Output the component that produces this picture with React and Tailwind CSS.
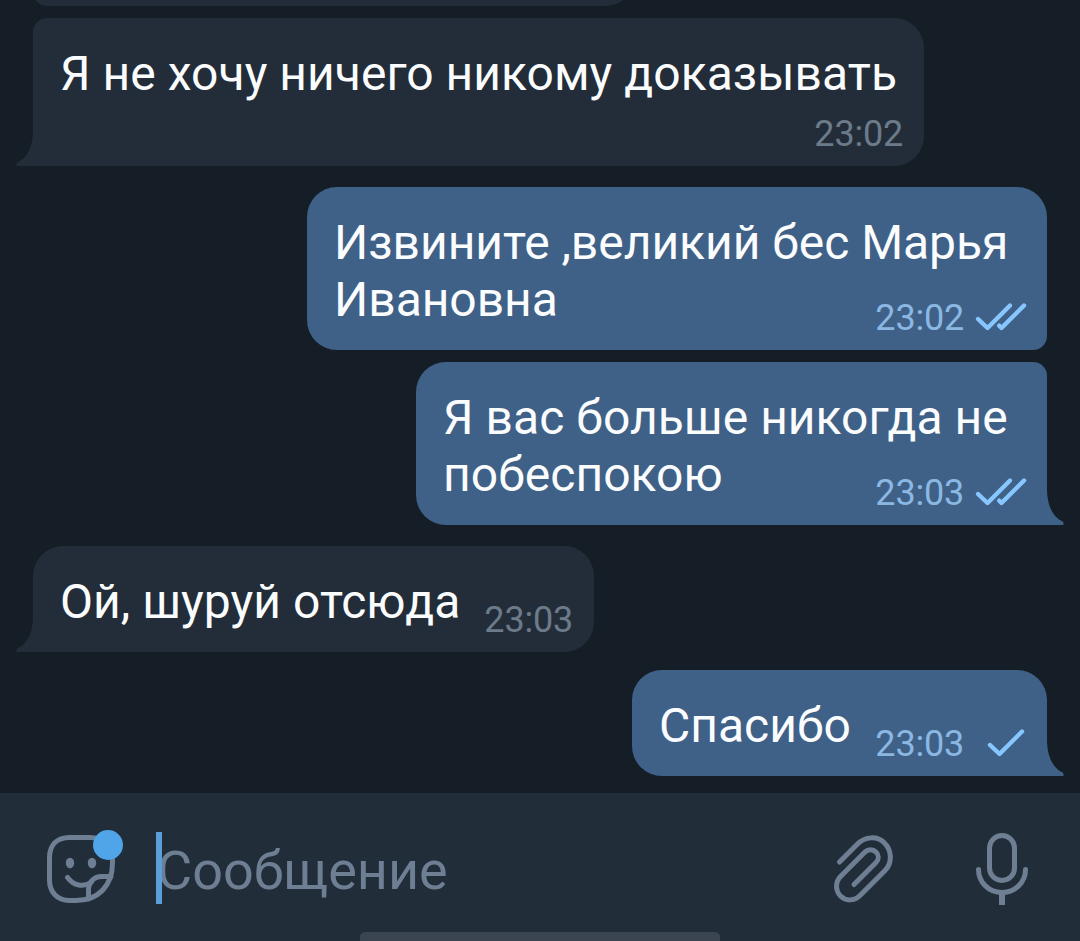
const ROUNDING = {
  inFirst: 'rounded-tl-[14px] rounded-tr-[30px] rounded-br-[30px]',
  inSingle: 'rounded-tl-[30px] rounded-tr-[30px] rounded-br-[30px]',
  outTop: 'rounded-l-[30px] rounded-tr-[30px] rounded-br-[14px]',
  outBottom: 'rounded-l-[30px] rounded-tr-[14px]',
  outSingle: 'rounded-l-[30px] rounded-tr-[30px]',
};

function Tail({ out }) {
  return (
    <svg
      className={out ? 'absolute bottom-0 left-full' : 'absolute right-full bottom-0 -scale-x-100'}
      width="17"
      height="34"
      viewBox="0 0 17 34"
      fill="currentColor"
      aria-hidden="true"
    >
      <path d="M0 0C0.500 15 6 26 15.500 30.500C17 31.500 17 34 15.500 34H0Z" />
    </svg>
  );
}

function Checks({ double }) {
  return (
    <svg
      width="56"
      height="32"
      viewBox="0 0 56 32"
      fill="none"
      stroke="#87c6fe"
      strokeWidth="4.400"
      strokeLinecap="round"
      strokeLinejoin="round"
      aria-hidden="true"
    >
      {double ? (
        <>
          <path d="M6 18L15.500 27L38 4.500" />
          <path d="M27.300 24.700L29.500 27L52 4.500" />
        </>
      ) : (
        <path d="M18 18L27.500 27L50 4.500" />
      )}
    </svg>
  );
}

function Bubble({ out, tail, shape, size, tracking = '', time, checks, children }) {
  return (
    <div
      className={`relative grid ${size} ${shape} ${
        out ? 'self-end bg-[#3f6187] text-[#3f6187]' : 'self-start bg-[#222d39] text-[#222d39]'
      }`}
    >
      <p
        className={`col-start-1 row-start-1 pt-[27px] pl-[27px] text-[48px] leading-[57px] whitespace-nowrap text-[#fbfcfd] ${tracking}`}
      >
        {children}
      </p>
      <div
        className={`col-start-1 row-start-1 flex items-end self-end justify-self-end pb-[11px] text-[36px] leading-[42px] ${
          out ? 'text-[#8bb8e2]' : 'pr-[21px] text-[#6c7b8a]'
        }`}
      >
        <span className="tracking-[-0.2px]">{time}</span>
        {checks && (
          <span className="pr-[19px] pb-[6px] pl-[8px]">
            <Checks double={checks === 2} />
          </span>
        )}
      </div>
      {tail && <Tail out={out} />}
    </div>
  );
}

function StickerIcon() {
  return (
    <svg width="84" height="84" viewBox="0 0 84 84" fill="none" aria-hidden="true">
      <g stroke="#6e7f93" strokeWidth="5" strokeLinecap="round" strokeLinejoin="round">
        <path d="M29.500 10.500H50C63 10.500 72.500 19 72.500 32V36C72.500 59 58 73.500 36 73.500H29.500C17 73.500 9.500 65 9.500 53V31C9.500 18 17 10.500 29.500 10.500Z" />
        <path d="M27.500 50.500C34 59 43 60.500 51 55.500" />
        <path d="M48.500 72V63C48.500 55 54 49.500 62 49.500H71" />
      </g>
      <ellipse cx="30" cy="36" rx="4.200" ry="5.300" fill="#6e7f93" />
      <ellipse cx="52" cy="36" rx="4.200" ry="5.300" fill="#6e7f93" />
      <circle cx="68" cy="18" r="15" fill="#4fa5e8" />
    </svg>
  );
}

function ClipIcon() {
  return (
    <svg
      width="64"
      height="72"
      viewBox="0 0 64 72"
      fill="none"
      stroke="#6e7f93"
      strokeWidth="5"
      strokeLinecap="round"
      aria-hidden="true"
    >
      <path d="M7.500 29L25.500 11C33 3.500 45 2.500 52.500 10C60 17.500 60.500 30 53 37.500L28 62.500C22.500 68 14 68.500 8.500 63C3.200 57.500 3.200 49 8.500 43.500L33 19C36 16 41 16 44 19C47 22 47 26.500 44 29.500L22 51.500" />
    </svg>
  );
}

function MicIcon() {
  return (
    <svg
      width="56"
      height="76"
      viewBox="0 0 56 76"
      fill="none"
      stroke="#6e7f93"
      strokeWidth="5"
      aria-hidden="true"
    >
      <rect x="15.500" y="4.500" width="25" height="45" rx="12.500" />
      <path d="M4.500 38.500C4.500 51.500 15 61.500 28 61.500C41 61.500 51.500 51.500 51.500 38.500" strokeLinecap="round" />
      <path d="M28 61V74" strokeWidth="6" />
    </svg>
  );
}

export default function App() {
  return (
    <div className="flex h-[941px] w-[1080px] flex-col overflow-hidden bg-[#151e27] font-['Roboto',sans-serif]">
      <main className="flex h-[793px] shrink-0 flex-col px-[33px]">
        <div className="flex h-[6px] shrink-0 items-end overflow-hidden">
          <div className="h-[60px] w-[602px] shrink-0 rounded-br-[30px] rounded-bl-[14px] bg-[#222d39]" />
        </div>
        <div className="flex flex-col pt-[12px]">
          <Bubble
            tail
            shape={ROUNDING.inFirst}
            size="w-[891px] h-[148px]"
            tracking="tracking-[0.04px]"
            time="23:02"
          >
            Я не хочу ничего никому доказывать
          </Bubble>
        </div>
        <div className="flex flex-col gap-[12px] pt-[21px]">
          <Bubble
            out
            shape={ROUNDING.outTop}
            size="w-[740px] h-[163px]"
            tracking="tracking-[-0.03px]"
            time="23:02"
            checks={2}
          >
            Извините ,великий бес Марья
            <br />
            Ивановна
          </Bubble>
          <Bubble
            out
            tail
            shape={ROUNDING.outBottom}
            size="w-[631px] h-[163px]"
            tracking="tracking-[0.04px]"
            time="23:03"
            checks={2}
          >
            Я вас больше никогда не
            <br />
            побеспокою
          </Bubble>
        </div>
        <div className="flex flex-col pt-[21px]">
          <Bubble
            tail
            shape={ROUNDING.inSingle}
            size="w-[561px] h-[106px]"
            tracking="tracking-[0.04px]"
            time="23:03"
          >
            Ой, шуруй отсюда
          </Bubble>
        </div>
        <div className="flex flex-col pt-[18px]">
          <Bubble out tail shape={ROUNDING.outSingle} size="w-[415px] h-[106px]" time="23:03" checks={1}>
            Спасибо
          </Bubble>
        </div>
      </main>
      <footer className="flex h-[148px] shrink-0 flex-col bg-[#222d3a]">
        <div className="flex h-[139px] items-start pr-[50px] pl-[40px]">
          <div className="pt-[34px]">
            <StickerIcon />
          </div>
          <div className="flex grow pt-[39px] pl-[32px]">
            <span className="z-10 h-[72px] w-[6px] bg-[#5a9fd9]" />
            <span className="-ml-[5px] pt-[7px] text-[54px] leading-[64px] text-[#6e7f93]">Сообщение</span>
          </div>
          <div className="pt-[40px]">
            <ClipIcon />
          </div>
          <div className="pt-[38px] pl-[78px]">
            <MicIcon />
          </div>
        </div>
        <div className="h-[9px] w-[360px] self-center rounded-t-[5px] bg-[#3a4551]" />
      </footer>
    </div>
  );
}
